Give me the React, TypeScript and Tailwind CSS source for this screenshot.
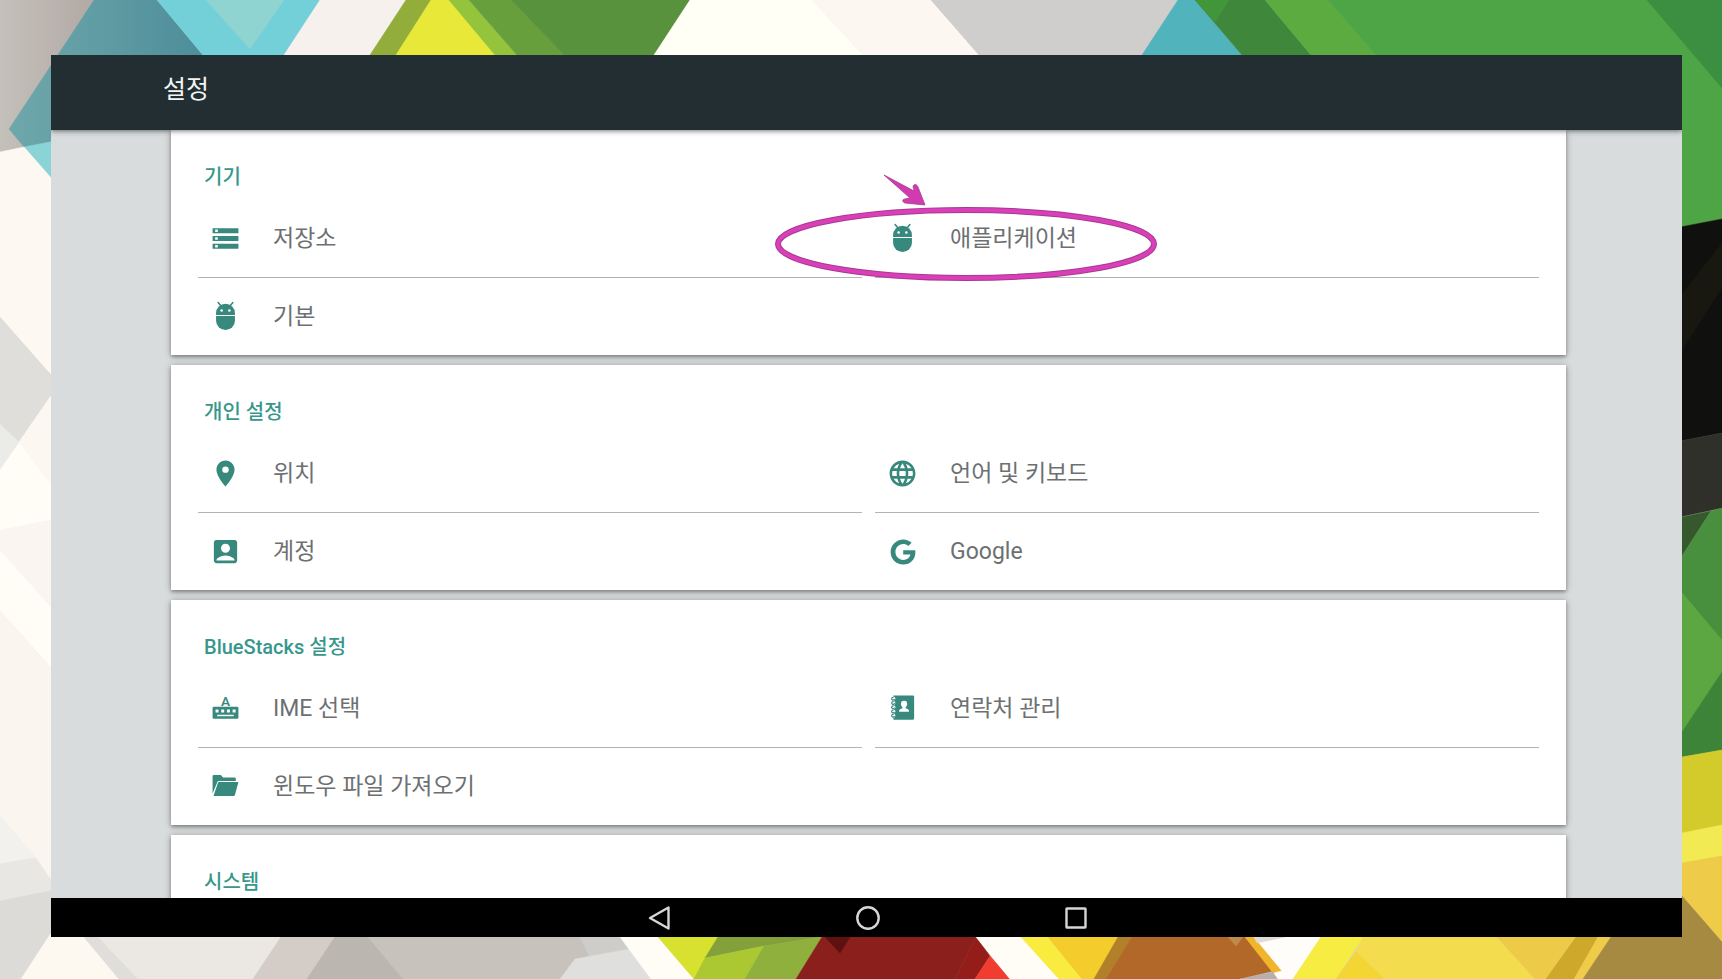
import type { ReactNode } from 'react';
import { FaGoogle } from 'react-icons/fa';
import {
  MdAccountBox,
  MdLanguage,
  MdLocationOn,
  MdStorage,
} from 'react-icons/md';

type Item = {
  label: string;
  icon: ReactNode;
  highlighted?: boolean;
};

type Section = {
  title: string;
  items: Item[];
};

const AndroidIcon = () => (
  <svg viewBox="0 0 24 24" className="w-[31px] h-[31px]" fill="currentColor">
    <path
      d="M6.300 1.200l2.200 2.600M17.700 1.200l-2.200 2.600"
      stroke="currentColor"
      strokeWidth="1.2"
      strokeLinecap="round"
    />
    <path d="M4.700 10.800V9.400a7.300 7.300 0 0 1 14.600 0v1.400z" />
    <path d="M4.700 11.700h14.600v3.500a7.300 7.300 0 0 1-14.600 0z" />
    <circle cx="9" cy="7.3" r="1" fill="#fff" />
    <circle cx="15" cy="7.3" r="1" fill="#fff" />
  </svg>
);

const KeyboardIcon = () => (
  <svg viewBox="0 0 24 24" className="w-[31px] h-[31px]" fill="currentColor">
    <text
      x="12"
      y="9.9"
      fontSize="10.5"
      fontWeight="600"
      textAnchor="middle"
      fontFamily="Roboto, sans-serif"
    >
      A
    </text>
    <path
      fillRule="evenodd"
      d="M3 10.700h18a1 1 0 0 1 1 1v7.200a1 1 0 0 1-1 1H3a1 1 0 0 1-1-1v-7.200a1 1 0 0 1 1-1zM4.300 12.800v2.200h2.300v-2.200zm4.400 0v2.200H11v-2.200zm4.400 0v2.200h2.300v-2.200zm4.400 0v2.200h2.300v-2.200zM5.600 16.800v1.200h12.800v-1.200z"
    />
  </svg>
);

const ContactsIcon = () => (
  <svg viewBox="0 0 24 24" className="w-[31px] h-[31px]" fill="currentColor">
    <path d="M5 2h15.100a.9.9 0 0 1 .9.9v16.900a.9.9 0 0 1-.9.9H5z" />
    {[4, 7.3, 10.6, 13.9, 17.2].map((y) => (
      <g key={y}>
        <circle cx="5" cy={y + 0.4} r="1.5" fill="#fff" />
        <path
          d={`M5.800 ${y + 0.6}a1.100 1.100 0 1 1-.7-1.200`}
          fill="none"
          stroke="currentColor"
          strokeWidth="0.9"
        />
      </g>
    ))}
    <path
      fill="#fff"
      d="M13.200 6a2.400 2.400 0 0 1 2.400 2.600c0 1-.5 2-1.200 2.500v.7c1.500.4 2.700.9 2.700 2.800H9.300c0-1.900 1.200-2.400 2.700-2.800v-.7c-.7-.5-1.200-1.500-1.200-2.500A2.400 2.400 0 0 1 13.200 6z"
    />
  </svg>
);

const FolderIcon = () => (
  <svg viewBox="0 0 24 24" className="w-[31px] h-[31px]" fill="currentColor">
    <path d="M2 4a1 1 0 0 1 1-1h5.400l1.700 2h8.900a1 1 0 0 1 1 1v1.700H6.700a1 1 0 0 0-.9.600L2 17.500z" />
    <path d="M7 8.500h15l-2.700 10a1.200 1.200 0 0 1-1.100.9H2.700L6.100 9.200a1 1 0 0 1 .9-.7z" />
  </svg>
);

const sections: Section[] = [
  {
    title: '기기',
    items: [
      { label: '저장소', icon: <MdStorage size={31} /> },
      { label: '애플리케이션', icon: <AndroidIcon />, highlighted: true },
      { label: '기본', icon: <AndroidIcon /> },
    ],
  },
  {
    title: '개인 설정',
    items: [
      { label: '위치', icon: <MdLocationOn size={31} /> },
      { label: '언어 및 키보드', icon: <MdLanguage size={31} /> },
      { label: '계정', icon: <MdAccountBox size={31} /> },
      { label: 'Google', icon: <FaGoogle size={26} /> },
    ],
  },
  {
    title: 'BlueStacks 설정',
    items: [
      { label: 'IME 선택', icon: <KeyboardIcon /> },
      { label: '연락처 관리', icon: <ContactsIcon /> },
      { label: '윈도우 파일 가져오기', icon: <FolderIcon /> },
    ],
  },
  { title: '시스템', items: [] },
];

// [fill, points]
const shards: [string, string][] = [
  // top edge
  ['url(#stone)', '0,0 94,0 9,129 24,147 0,152'],
  ['url(#sea)', '94,0 157,0 240,100 60,147 24,147 9,129'],
  ['#8ad4d8', '24,147 60,140 60,188 51,178'],
  ['#73d0d8', '157,0 320,0 284,55 203,55'],
  ['#8fd4d0', '206,0 284,0 250,49'],
  ['#f6f1ed', '320,0 406,0 370,55 284,55'],
  ['#93ad3b', '406,0 431,0 396,55 370,55'],
  ['#e8e838', '431,0 449,0 495,55 396,55'],
  ['#94c43b', '449,0 469,0 517,55 495,55'],
  ['#689f3d', '469,0 511,0 564,55 517,55'],
  ['#58923d', '511,0 690,0 654,55 564,55'],
  ['#fffff6', '690,0 812,0 863,55 654,55'],
  ['#fcf8f1', '812,0 931,0 979,55 863,55'],
  ['#d0cecc', '931,0 1178,0 1142,55 979,55'],
  ['#51b3bb', '1178,0 1195,0 1242,55 1142,55'],
  ['#3f883b', '1195,0 1265,0 1311,55 1242,55'],
  ['#42963a', '1195,0 1229,0 1215,22'],
  ['#5cab40', '1265,0 1328,0 1376,55 1311,55'],
  ['#4da545', '1328,0 1722,0 1722,219 1670,229 1670,55 1376,55'],
  ['#3c8f40', '1647,0 1722,0 1722,88 1694,55'],
  // left edge
  ['#fdf8f1', '0,152 24,147 60,188 60,384 47,370 0,317'],
  ['#dfdeda', '0,317 51,376 51,396 19,442 0,424'],
  ['#ebebe7', '0,424 19,442 0,470'],
  ['#fffdf6', '0,470 51,396 51,668 0,611'],
  ['#fcf7f1', '51,396 19,442 51,484'],
  ['#faf5f0', '0,530 51,520 51,607 0,550'],
  ['#faf5ef', '0,611 51,668 51,880 0,816'],
  ['#f3f1ed', '0,816 36,858 0,864'],
  ['#e8e7e3', '0,864 36,858 51,880 51,891 0,901'],
  ['#dddbd8', '0,901 51,891 60,920 51,935 21,979 0,979'],
  // right edge
  ['#10110f', '1670,229 1722,219 1722,433 1670,443'],
  ['#181810', '1682,294 1722,243 1722,288 1682,350'],
  ['#30302b', '1670,443 1722,433 1722,508 1670,519'],
  ['#35592c', '1682,517 1711,511 1682,556'],
  ['#49903e', '1711,511 1722,508 1722,641 1682,593 1682,556'],
  ['#5ca741', '1682,593 1722,640 1722,673 1682,732'],
  ['#3d8439', '1682,732 1722,672 1722,750 1682,757'],
  ['#d2cb2b', '1682,757 1722,750 1722,825 1682,833'],
  ['#f1ea52', '1682,833 1722,825 1722,856 1682,863'],
  ['#eecb49', '1682,863 1722,856 1722,942 1682,896'],
  // bottom edge
  ['#fdf8f0', '51,933 84,937 119,979 21,979'],
  ['#e0dedb', '84,937 98,937 138,979 119,979'],
  ['#ebe8e4', '98,937 281,937 253,979 138,979'],
  ['#d3ccc7', '281,937 335,937 307,979 253,979'],
  ['#bbb7b0', '335,937 368,937 403,979 307,979'],
  ['#c7c2bb', '368,937 580,937 620,979 403,979'],
  ['#cfcdca', '580,937 620,937 651,979 600,979'],
  ['#dfdfdd', '575,959 630,949 651,979 560,979'],
  ['#fffdf6', '620,937 658,937 694,979 651,979'],
  ['#d8e030', '658,937 720,937 694,979'],
  ['#83a03a', '718,937 822,937 764,946 705,958'],
  ['#abc833', '705,958 764,946 745,979 694,979'],
  ['#90b03e', '764,946 822,937 796,979 745,979'],
  ['#8a1f1b', '822,937 976,937 955,979 796,979'],
  ['#5e1111', '825,937 850,937 840,953'],
  ['#941d1a', '976,937 990,956 975,979 955,979'],
  ['#f03d30', '990,956 1010,979 975,979'],
  ['#fffdf6', '976,937 1021,937 1059,979 1010,979'],
  ['#faec3f', '1021,937 1048,937 1082,979 1059,979'],
  ['#f4cd2c', '1048,937 1118,937 1094,979 1082,979'],
  ['#b18028', '1118,937 1132,937 1106,979 1094,979'],
  ['#b16828', '1132,937 1245,937 1273,971 1240,979 1106,979'],
  ['#c08a4a', '1228,937 1243,937 1236,946'],
  ['#f0b52a', '1245,937 1254,937 1282,971 1273,973'],
  ['#b5b0ac', '1240,979 1273,972 1278,979'],
  ['#fffdf9', '1254,937 1321,937 1293,979 1278,979 1274,973 1282,971'],
  ['#dedbd8', '1254,937 1285,937 1257,943'],
  ['#f7ec42', '1321,937 1363,937 1336,979 1293,979'],
  ['#f3d634', '1356,951 1385,979 1336,979'],
  ['#f3dd4e', '1363,937 1497,937 1535,979 1385,979 1356,951'],
  ['#edcb48', '1497,937 1576,937 1546,979 1535,979'],
  ['#cda82a', '1576,937 1598,937 1574,979 1546,979'],
  ['#eecb48', '1598,937 1611,937 1583,979 1574,979'],
  ['#a68a42', '1611,937 1682,937 1682,896 1722,942 1722,979 1583,979'],
];

const Wallpaper = () => (
  <svg
    viewBox="0 0 1722 979"
    preserveAspectRatio="none"
    className="absolute inset-0 w-full h-full"
    aria-hidden="true"
  >
    <defs>
      <linearGradient id="stone">
        <stop offset="0" stopColor="#c4c0ba" />
        <stop offset="1" stopColor="#b3a9a5" />
      </linearGradient>
      <linearGradient id="sea">
        <stop offset="0" stopColor="#6fa8ab" />
        <stop offset="0.8" stopColor="#4f8f9b" />
      </linearGradient>
    </defs>
    {shards.map(([fill, points]) => (
      <polygon key={points} fill={fill} stroke={fill} strokeWidth="0.5" points={points} />
    ))}
  </svg>
);

const Marker = () => (
  <svg
    viewBox="0 0 400 120"
    className="absolute w-[400px] h-[120px] -left-[107px] -top-[30px] z-10 pointer-events-none"
    aria-hidden="true"
  >
    <ellipse
      cx="198"
      cy="74"
      rx="188"
      ry="34"
      fill="none"
      stroke="#a8398f"
      strokeWidth="6"
    />
    <ellipse
      cx="198"
      cy="74"
      rx="188"
      ry="34"
      fill="none"
      stroke="#d93fb9"
      strokeWidth="4"
    />
    <path
      d="M116 5l30 16c0-2-2-5 0-6s3 0 4 2l7 18-20-2c-3-1-3-4 0-4l5-1z"
      fill="#d23bb0"
      stroke="#a8398f"
      strokeWidth="0.8"
      strokeLinejoin="round"
    />
  </svg>
);

const SettingsCard = ({ section }: { section: Section }) => (
  <section className="bg-white shrink-0 min-h-[225px] px-[27px] shadow-[0_2px_3px_rgba(0,0,0,0.25),0_1px_7px_rgba(0,0,0,0.3)]">
    <h2 className="h-[70px] pt-[35px] pl-[6px] text-[20px] leading-6 font-medium text-[#37978c]">
      {section.title}
    </h2>
    <ul className="grid grid-cols-2 gap-x-[13px]">
      {section.items.map((item, i) => (
        <li
          key={item.label}
          className={`relative ${i < 2 ? 'border-b border-[#b0b5b4]' : ''}`}
        >
          <a href="#" className="flex items-center h-[77px] pl-[12px] text-[#6d7072]">
            <span className="w-[31px] flex justify-center text-[#37887d]">
              {item.icon}
            </span>
            <span className="ml-[32px] text-[23px] leading-8">{item.label}</span>
          </a>
          {item.highlighted && <Marker />}
        </li>
      ))}
    </ul>
  </section>
);

const NavBar = () => (
  <nav className="flex justify-center shrink-0 h-[39px] bg-black text-[#d4d6d8]">
    <button type="button" aria-label="뒤로" className="w-[208px] flex items-center justify-center">
      <svg viewBox="0 0 26 26" className="w-[26px] h-[26px]" fill="none" stroke="currentColor" strokeWidth="2.4">
        <path d="M22.500 2.500v21L4 13z" strokeLinejoin="round" />
      </svg>
    </button>
    <button type="button" aria-label="홈" className="w-[208px] flex items-center justify-center">
      <svg viewBox="0 0 26 26" className="w-[26px] h-[26px]" fill="none" stroke="currentColor" strokeWidth="2.4">
        <circle cx="14" cy="13" r="10.700" />
      </svg>
    </button>
    <button type="button" aria-label="최근 앱" className="w-[208px] flex items-center justify-center">
      <svg viewBox="0 0 26 26" className="w-[26px] h-[26px]" fill="none" stroke="currentColor" strokeWidth="2.4">
        <rect x="4.500" y="3.500" width="19" height="19" rx="0.500" />
      </svg>
    </button>
  </nav>
);

const App = () => {
  return (
    <div
      className="relative h-screen overflow-hidden bg-[#d8d5d0] pt-[55px] pl-[51px] pr-[40px] pb-[42px]"
      style={{ fontFamily: 'Roboto, "Noto Sans CJK KR", sans-serif' }}
    >
      <Wallpaper />

      <div className="relative flex flex-col h-full overflow-hidden bg-[#d9dcdd]">
        <header className="relative z-20 shrink-0 h-[75px] pt-[19px] pl-[112px] bg-[#232e33] shadow-[0_1px_5px_rgba(0,0,0,0.55)]">
          <h1 className="text-[25px] leading-8 text-[#f2f4f5]">설정</h1>
        </header>

        <main className="flex-1 min-h-0 overflow-hidden flex flex-col gap-[10px] pl-[120px] pr-[116px]">
          {sections.map((section) => (
            <SettingsCard key={section.title} section={section} />
          ))}
        </main>

        <NavBar />
      </div>
    </div>
  );
};

export default App;
